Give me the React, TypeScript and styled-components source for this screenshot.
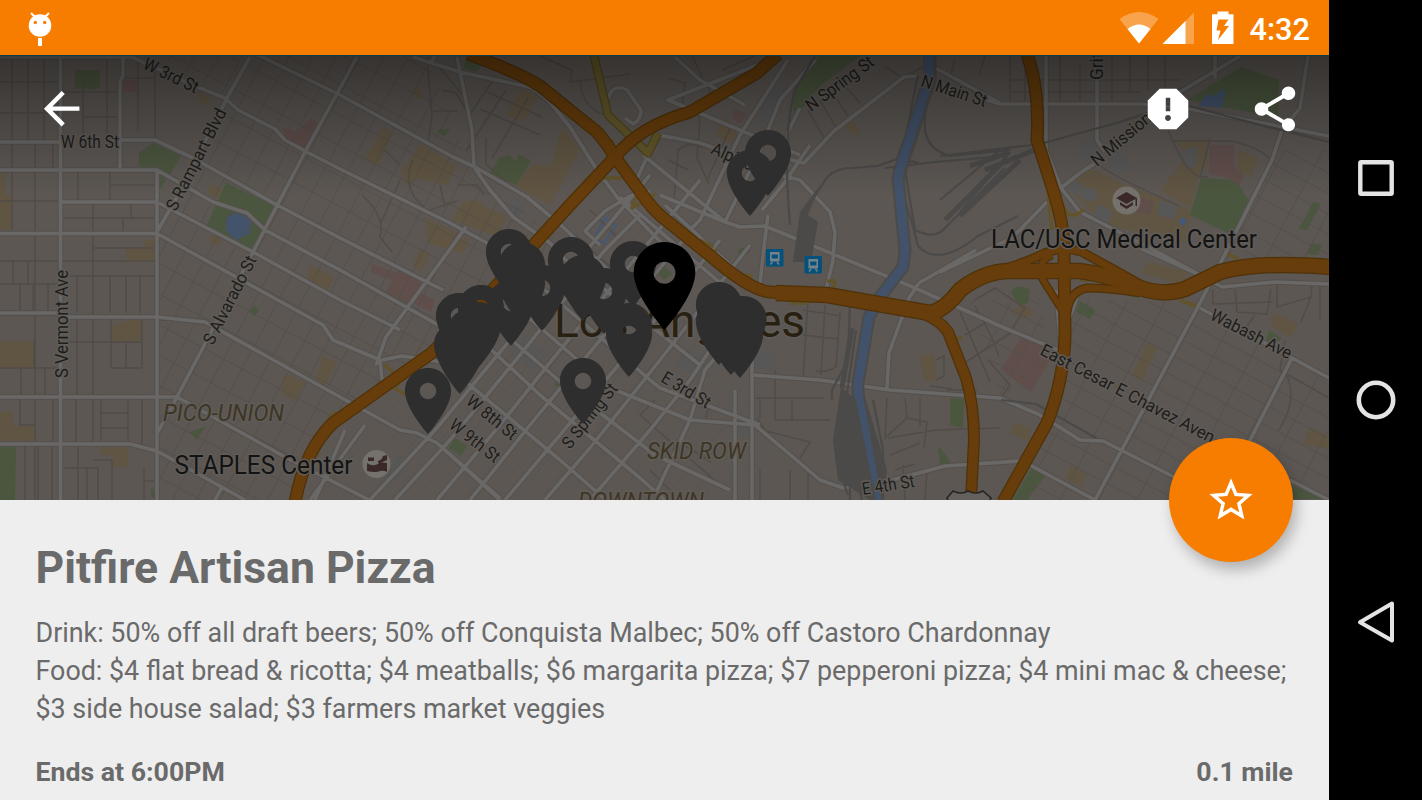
import React from "react";
import styled, { createGlobalStyle } from "styled-components";

const GlobalStyle = createGlobalStyle`
  body {
    margin: 0;
    background: #000;
    font-family: Roboto, "Liberation Sans", sans-serif;
  }
`;

const Device = styled.div`
  display: flex;
  width: 1422px;
  height: 800px;
  overflow: hidden;
  background: #000;
`;

const Screen = styled.div`
  display: flex;
  flex-direction: column;
  width: 1329px;
  height: 800px;
  background: #eee;
`;

const StatusBar = styled.div`
  display: flex;
  align-items: center;
  justify-content: space-between;
  box-sizing: border-box;
  height: 56px;
  flex: none;
  padding: 0 19px 0 28px;
  background: #f77d00;
  border-bottom: 1px solid #0b3b44;
`;

const StatusIcons = styled.div`
  display: flex;
  align-items: center;
`;

const Clock = styled.span`
  margin-left: 15px;
  color: #fff;
  font-size: 30.7px;
  font-weight: 500;
  line-height: 56px;
  padding-top: 4px;
`;

const Hero = styled.div`
  position: relative;
  display: grid;
  flex: none;
  height: 444px;

  & > * {
    grid-area: 1 / 1;
  }
`;

const Toolbar = styled.div`
  display: flex;
  align-items: center;
  justify-content: space-between;
  align-self: start;
  z-index: 1;
  height: 106px;
  padding: 0 27px 0 35px;
`;

const Actions = styled.div`
  display: flex;
  align-items: center;
  gap: 53px;
`;

const IconButton = styled.button`
  display: flex;
  padding: 0;
  border: 0;
  background: none;
`;

const Fab = styled.button`
  position: absolute;
  right: 36px;
  bottom: -62px;
  z-index: 2;
  display: flex;
  align-items: center;
  justify-content: center;
  width: 124px;
  height: 124px;
  padding: 0;
  border: 0;
  border-radius: 50%;
  background: #f77d00;
  box-shadow: 4px 8px 14px rgba(0, 0, 0, 0.25);
`;

const Details = styled.div`
  display: flex;
  flex-direction: column;
  flex: 1;
  padding: 40px 36px 0 35.5px;
  color: #6a6a6a;
`;

const Title = styled.h1`
  margin: 0;
  font-size: 44.5px;
  font-weight: 700;
  line-height: 56px;
`;

const Deals = styled.div`
  margin-top: 18px;
  font-size: 26.86px;
  line-height: 38px;
  white-space: nowrap;
`;

const Footer = styled.div`
  display: flex;
  justify-content: space-between;
  margin-top: 25px;
  font-size: 26.7px;
  font-weight: 700;
  line-height: 38px;
`;

const NavBar = styled.div`
  display: flex;
  flex-direction: column;
  align-items: center;
  justify-content: space-between;
  box-sizing: border-box;
  width: 93px;
  height: 800px;
  padding: 154px 0;
  background: #000;
`;

const MapSvg = styled.svg`
  display: block;
  background: #5c5753;
`;

const MapLabel = styled.text<{ $tone?: string }>`
  fill: ${(p) => p.$tone || "#1f1d1a"};
  stroke: #605c58;
  stroke-width: 3px;
  stroke-linejoin: round;
  paint-order: stroke;
`;

const PIN =
  "M12 2C8.13 2 5 5.13 5 9c0 5.25 7 13 7 13s7-7.75 7-13c0-3.87-3.13-7-7-7zm0 9.5c-1.38 0-2.5-1.12-2.5-2.5s1.12-2.5 2.5-2.5 2.5 1.12 2.5 2.5-1.12 2.5-2.5 2.5z";

// tip of each pin
const pins = [
  [428, 434], [509, 295], [522, 308], [511, 346], [542, 331], [571, 303], [583, 321],
  [604, 334], [633, 307], [629, 369], [629, 377], [583, 424], [719, 348], [719, 365],
  [731, 375], [740, 378], [743.5, 362], [459, 359], [481, 351], [478, 368], [470, 375],
  [466, 383], [457, 388], [460, 394], [768, 196], [750, 216], [522, 326], [722, 356],
  [733, 364],
];

type Label = {
  text: string;
  x: number;
  y: number;
  len: number;
  angle?: number;
  size?: number;
  tone?: string;
  italic?: boolean;
};

const AREA = "#3e3525";

const labels: Label[] = [
  { text: "W 3rd St", x: 142, y: 68, angle: 25.5, len: 59 },
  { text: "W 6th St", x: 61, y: 148, len: 58 },
  { text: "S Rampart Blvd", x: 176, y: 212, angle: -63, len: 112 },
  { text: "S Vermont Ave", x: 68, y: 378, angle: -90, len: 108 },
  { text: "S Alvarado St", x: 213, y: 346, angle: -63, len: 97 },
  { text: "N Spring St", x: 811, y: 112, angle: -36.5, len: 80 },
  { text: "N Main St", x: 920, y: 86, angle: 18, len: 68 },
  { text: "Alpine", x: 710, y: 153, angle: 24, len: 44 },
  { text: "N Mission", x: 1097, y: 167, angle: -40, len: 73 },
  { text: "Griffin", x: 1103, y: 80, angle: -90, len: 46 },
  { text: "Wabash Ave", x: 1209, y: 319, angle: 27, len: 89 },
  { text: "East Cesar E Chavez Aven", x: 1039, y: 354, angle: 27.5, len: 194 },
  { text: "E 3rd St", x: 660, y: 381, angle: 31, len: 54 },
  { text: "W 8th St", x: 465, y: 403, angle: 39, len: 60 },
  { text: "W 9th St", x: 448, y: 427, angle: 38, len: 59 },
  { text: "S Spring St", x: 570, y: 450, angle: -51.5, len: 78 },
  { text: "E 4th St", x: 863, y: 495, angle: -9, len: 53 },
  { text: "Los Angeles", x: 554, y: 337, len: 251, size: 47, tone: "#282010" },
  { text: "PICO-UNION", x: 163, y: 421, len: 121, size: 24, tone: AREA, italic: true },
  { text: "SKID ROW", x: 647, y: 459, len: 99, size: 23.5, tone: AREA, italic: true },
  { text: "DOWNTOWN", x: 578, y: 509, len: 126, size: 23.5, tone: AREA, italic: true },
  { text: "STAPLES Center", x: 174.5, y: 474, len: 178, size: 25.5, tone: "#141313" },
  { text: "LAC/USC Medical Center", x: 991, y: 248, len: 266, size: 25, tone: "#141313" },
];

const greens = [
  "M75 70h25v17l-7 3-8-2-10 1z",
  "M139 153l14-10 28 13-11 18-31-8z",
  "M160 175l6 5-6 10z",
  "M226 183l49 23-14 32-11 11-43-24z",
  "M0 447h16l-1 53H0z",
  "M189 432l16-5-8 13z",
  "M249 311l5-5 5 4-4 6z",
  "M490 173l10-16 9-1 7 5 3-7 12 7-15 24-26-12z",
  "M437 130l13-1-6 8z",
  "M465 60l17 5-6 7-12-4z",
  "M793 111c0-25 10-41 27-55h40l-40 30-22 27z",
  "M1187 100l54-33 38 13-1 38-90-18z",
  "M1201 178l35 2 16 25-20 30-42-20z",
  "M1313 202l8 2-14 26-8-1z",
  "M1312 243l10 2-5 10-10-1z",
  "M1011 292q8-10 19-2l-2 13-9 3z",
  "M1080 301l15 9-5 9-14-7z",
  "M950 398l14 1-1 29-13-3z",
  "M938 446l8 9 4 8-10 2z",
  "M1033 465l12 11-18 24h-14z",
  "M1269 330l13 9-12 5-3-5z",
  "M1290 485l39 14h-45z",
  "M560 376l8 5-4 10-10-6z",
  "M455 438l12 8-6 10-12-8z",
  "M657 272l7-6 8 8-8 6z",
  "M742 247l8 4-6 6-7-5z",
  "M151 488l4 2v8l-4-1z",
];

const tans = [
  "M0 173h5v22h6v35H0z",
  "M126 248h18v-8h10v22h-28z",
  "M112 326l17-6h13v21h-31z",
  "M0 341h34v27H0z",
  "M0 412h13v14l22 1v14H0z",
  "M101 447h27v20h-15v-12h-12z",
  "M199 92l12 6-6 7-7-4z",
  "M211 184l12 6-6 9-10-7z",
  "M213 234l9 5-6 7-8-6z",
  "M310 265l24 12-7 15-21-12z",
  "M323 356l14 7-12 22-10-5z",
  "M284 374l22 8-12 20-13-10z",
  "M383 127l10 6-16 33-12-7z",
  "M420 144l37 22-10 19-30-6-11 7-5-17 9-8z",
  "M417 85l6 10-3 5-7-6z",
  "M521 89l17 7-15 26-16-7z",
  "M562 127l18 23-30 55-37-21 22-20 16 2z",
  "M463 202l14-2 8 7 22 9-10 20-45-16z",
  "M425 217l45 23-7 14-35-11z",
  "M420 249l9 4-8 18-8-6z",
  "M723 117l16 12-7 15-16-8z",
  "M851 119l9 12-6 4-9-8z",
  "M920 356l14-3 2 28-12-1z",
  "M1012 312l12-8 11 10-14 4z",
  "M1015 422l17 8-4 12-18-9z",
  "M1070 465l17 9-6 12-15-7z",
  "M1148 262l40 10-5 14-42-14z",
  "M1147 343l10 5-15 33-10-5z",
  "M1272 312l26 12-7 14-20-12z",
  "M1309 428l20 7v14l-26-5z",
  "M1067 185l15-15 14 0 30 15 66 26-8 32-30-8-48-10-20-18z",
  "M1160 190l24-30 16 14-10 34z",
  "M1178 142l30 0 0 26-12 6-10-12z",
  "M1238 150l20 8-6 18-14-4z",
];

const reds = [
  "M122 80h15v12h-14z",
  "M283 127l13 5 15-14 8 6-13 25-20-8z",
  "M372 264l48 18-3 8-46-18z",
  "M398 270l30 15-18 20-24-13z",
  "M415 290l20 10-4 12-20-10z",
  "M735 109l12 5-6 9-9-5z",
  "M1022 336l34 14-25 42-30-22z",
  "M1210 145l24 0 0 20 10 12-5 8-14-8-16-4z",
  "M1140 197l14 6-4 12-14-4z",
];

const greys = [
  "M525 335l22 18-15 18-23-20z",
  "M510 193l14 12-5 15-10-6z",
  "M690 348l20 17-14 14-20-16z",
  "M1082 140l18 2 5 12-14 10-12-6z",
  "M1108 150l16 4 6 14-10 6-12-8z",
  "M1068 178l14 6-2 10-10-2z",
  "M1082 186l14 4 2 8-10 4-8-6z",
  "M1098 204l14 8-4 12-14-8z",
  "M1160 200l18 6-5 14-16-6z",
  "M1178 152l20-6-2 20-8 4z",
  "M398 455l12 8-14 18-10-8z",
  "M736 420l14 4v14l-14-6z",
  "M768 86l20 3-18 35-12-2z",
  "M752 352l22 4v14l-22-2z",
];

const minorRoads = [
  // west grid
  "M12 56V140M28 56V140M44 56V140M0 82H60M0 113H60M83 75V140M107 56V140M61 92H120M83 117H120M138 60V130M155 60V140M123 78H155",
  "M12 142V230M35 142V500M53 142V170M0 201H61M78 172V202M110 172V202M110 185H157M93 202V264M131 202V218M61 218H157M93 248H157M123 218V233",
  "M0 261H157M13 262V284M28 262V284M0 284H61M20 284V313M33 284V313M48 284V313M77 276V313M93 250V397M110 276V313M126 276V313M140 276V313M61 276H157",
  "M77 317V397M61 342H142M111 319V368M142 319V368M111 368H142M126 342V368M0 368H61M34 341V368M21 368V397M45 368V397",
  "M20 397V425H35M53 397V444M76 397V444M93 397V444M101 397V444M128 397V444M101 413H128M101 428H128M142 397V444",
  "M25 444V500M38 444V500M52 444V500M78 444V500M64 468H98V500M87 468V500M93 460H112V500M144 468V500M157 481H143",
  // echo park
  "M427 57l5 60-4 25M438 66l30 35M442 90l14 3 13 22v14M433 111h24M413 160q-10 20 2 38l12 13 30-10M457 185l20 0 7 10",
  "M486 138l0 26 25 22M495 77l-28 42M506 90l-40 61M528 98l-36 60M487 92l55 25M480 109l60 26M540 56l32 14-2 12 60-8M580 82q3 28 28 34",
  "M385 150l15 15M362 195q24 22 18 42l12 15M400 180l-20 45M440 185l5 22M575 235l50 45M590 210l30 30",
  // chinatown
  "M668 78l17 5-3 25M692 56l20 40-14 22M722 70l32-14M700 118l-3 40 12 26M674 200l4-50 10-6 22 4M730 128l-22 50M668 160l20 10",
  "M808 110l16 28M820 100l16 28M832 92l16 24M844 85l16 18M885 66l18 12 26-15M955 60l-5 18 30 18M985 56l-6 20",
  // north east
  "M1010 56V100M1025 60V106M1060 56V106M1080 62V106M1112 56V106M1130 56V90M1148 56V90M1165 56V88M1010 80H1180M1010 92H1140",
  "M1168 130q16 40 30 46l10 1M1172 141h60q30 8 38 18M1100 166q20 14 80 40M1200 178l10-40",
  // arts district
  "M803 310l38 6M803 335l35 4M808 300l-5 80M825 305l-4 70M840 312l-4 55q-10 6-20 4M887 398l-2 40 22-20 20 4-3 26M905 398l2 20M920 398l0 28",
  "M888 438l48-8 64-2M890 455l30-12M895 470l20-6M905 500l-2-35M925 500l2-30M947 390l30 0M936 360l8-4v20l-8 4M930 386l22 3",
  "M960 312l30 70M975 306l16 30 8 20M990 320l-25 15M1012 332l-46 30M975 300l20-12 30 20-16 26M988 360l22 25-8 12",
  // skid row
  "M752 375v120M775 370v50h55M752 398h72M760 398v20M792 400v20M762 430l48 12-10 16M790 470v30M808 470v30M760 470v30M772 440l-15-22",
  "M650 470l20 20M655 400l-15 15 80 70M690 420l-18 32M735 430v65M710 400l-5 22M676 440l35 22",
  // boyle heights
  "M1235 290l2 22 30 2 4-25M1213 290l0 14 60-2M1277 285v22l34-10 1-12M1311 297l-10 25M1320 285v35M1284 370q16 26-5 60",
  "M1285 340l-5 30 49 28M1255 315l-10 14 15 6",
];

const mainRoads = [
  "M60.500 56V500",
  "M123 56V75l-3 7V168",
  "M0 142H60M118 140H155L193 158 277 205 340 238 443 290",
  "M0 57H132L200 88 225 98 238 110 275 129 285 140 305 151 340 169 450 223 500 250",
  "M258 55L340 95 453 157 475 167 527 197 563 227 640 300",
  "M413 57L460 72 533 88 548 100 570 127 597 170 617 197 680 262",
  "M457 57L472 130 474 167 490 190 513 217 550 243 575 270",
  "M435 56L430 64",
  "M250 57L227 98 177 197 158 230",
  "M357 57L305 152 253 252 177 397 158 432",
  "M0 170H157L213 202 247 213 265 230 340 270 440 326",
  "M61 202H157L253 252 340 300 400 330",
  "M0 233.500H157L187 250 323 325 333 340 380 360 382 380",
  "M157 170V500",
  "M0 313H61V317H157L205 322 340 397 400 430 417 433 437 443 500 498",
  "M0 397H177L287 458 375 503",
  "M0 444H130L157 451 245 500M222 487l-7 13",
  "M315 500l30-70M310 500l55-75M376 365l10-28 80-110",
  // downtown, south-west to north-east
  "M370 500L437 428 500 352 615 217 650 175",
  "M395 500L450 440 520 355 560 305 605 250 640 215",
  "M437 500L500 425 560 350 700 180",
  "M470 500L530 425 600 340 690 232",
  "M505 500L560 435 635 345 720 240",
  "M545 500L590 448 660 360 750 245",
  "M590 500L650 430 690 380 710 350",
  "M655 495L690 420 705 370 730 340",
  "M735 500V390",
  "M752 500V340",
  // downtown, north-west to south-east
  "M382 360l20-4 40 6L560 460 606 500",
  "M437 443L500 500",
  "M470 330L540 395 640 478 665 500",
  "M500 330L570 390 655 455 730 490",
  "M520 310L610 388 690 420 755 425 820 480 843 488H862L945 466 1020 461",
  "M545 290L650 380 660 388 760 425",
  "M580 270L700 365",
  "M620 197L740 300",
  "M665 205L760 292",
  "M643 155L725 222 740 227 765 226 908 285 960 308 1000 326 1058 350",
  "M660 135L700 143 740 157 780 175 800 180 830 212 835 232 833 260 826 290",
  "M660 195L725 222M770 60L668 100 800 155M788 60L740 135 700 220 690 230M815 60L780 100 760 150 725 222",
  "M675 57L700 80 745 105M768 215l-5 40-3 30M800 108l-12 24-4 26 20 5 30-32 70-54 15-1M762 210L785 182 810 145",
  "M600 245l-15-14 20-20 25-15 20-5M605 110q5-30 22-20l14 20q0 10-8 14l-8-6",
  "M648 155l12-20 12 3M648 155l-14 30",
  // east
  "M752 375L820 380 890 390 1000 398 1040 415 1080 440 1103 441 1180 480",
  "M887 388l2-35 20-55 10-15 57-33M1056 290l4 50M1063 335l15-40",
  "M983 99L1000 104H1140L1190 109 1329 136",
  "M1046 56V150L1061 188 1080 173 1100 160M1097 80V140l8 12",
  "M1047 202L1012 238 940 272M1061 188L1080 212 1150 248 1200 275",
  "M1150 104L1180 92 1240 56M1215 56V78",
  "M1308 56L1300 108 1282 130 1272 160 1222 260 1200 303 1095 500",
  "M1140 248L1200 275 1222 287 1275 282 1329 284",
  "M1200 308L1292 358 1329 378M1292 358L1245 450",
  "M1030 465L1080 492 1095 500M1290 480L1329 500",
  "M930 65L1000 103",
];

const rails = [
  "M925 75l-20 62-8 22-20 7-25 2q-20 0-28 14L800 220",
  "M918 75l-14 70-8 20M925 90v40q3 20 25 26l60-6",
  "M885 168l50-6 70-6M893 166q18 50 25 80 20 22 60-10l40-20",
  "M905 170l10 60q20 10 30-2l60-60M940 200l60-50M960 212l50-60",
  "M903 185q0-30 15-22",
  "M856 330l-10 70-10 60 12 35M850 300l-2 60-16 30v10M842 400l-6 50 10 40M852 400l0 60 10 40M846 400l4 60 0 40M873 400l10 50 0 50",
  "M1001 400l35 4 60 34M1329 142l-80-20-60-16M940 156l100-12 80-22 30-10",
  "M790 225q-8-90 5-135l20-34",
];

// width is the carriageway, the casing adds 2.5 around it
const freeways = [
  {
    width: 10.5,
    d: "M468 54Q520 73 540 86L597 132Q608 145 615 157L647 201Q657 214 672 225L713 258Q750 290 770 292L785 293",
  },
  {
    width: 10.5,
    d: "M778 54L757 73 690 112Q640 126 615 157L570 205 497 285 433 352 333 423Q305 450 295 502",
  },
  {
    width: 14,
    d: "M776 293L827 295 930 313Q945 310 960 290 985 270 1013 271H1080Q1110 275 1140 288 1165 296 1185 289L1220 272Q1260 261 1331 267",
  },
  { width: 9.5, d: "M920 312Q940 320 948 332L966 378Q974 405 974 440L971 500" },
  {
    width: 10.5,
    d: "M1027 54Q1040 90 1037 140L1054 193Q1064 225 1064 250L1065 335Q1064 380 1047 423L1003 502",
  },
  { width: 7, d: "M1002 269Q1022 264 1045 253 1063 246 1082 252L1113 269 1145 287" },
  { width: 5.5, d: "M1052 255Q1034 264 1043 280L1062 310" },
  { width: 6.5, d: "M1140 293Q1110 288 1087 288 1070 291 1067 312" },
];

function Glyph({ size, d, fill = "#fff" }: { size: number; d: string; fill?: string }) {
  return (
    <svg width={size} height={size} viewBox="0 0 24 24" fill={fill}>
      <path d={d} />
    </svg>
  );
}

function Bus({ x, y }: { x: number; y: number }) {
  return (
    <g transform={`translate(${x} ${y})`}>
      <rect width="17.500" height="17.500" rx="1" fill="#04527c" />
      <path d="M4 3h9.500v9.500H4zM5.700 5.500V9.500h6.200v-4z" fill="#76838b" fillRule="evenodd" />
      <path d="M4.500 15.500l2-2.500M13 15.500l-2-2.500" stroke="#76838b" strokeWidth="1.500" />
    </g>
  );
}

function CityMap() {
  return (
    <MapSvg width="1329" height="444" viewBox="0 56 1329 444">
      <defs>
        <pattern id="westBlocks" width="21" height="27" patternUnits="userSpaceOnUse" patternTransform="translate(157 170) rotate(28)">
          <path d="M0 0H21M0 0V27" fill="none" stroke="#524d49" strokeWidth="1.500" />
        </pattern>
        <pattern id="eastBlocks" width="34" height="18" patternUnits="userSpaceOnUse" patternTransform="translate(1200 308) rotate(28)">
          <path d="M0 0H34M0 0V18" fill="none" stroke="#524d49" strokeWidth="1.500" />
        </pattern>
        <pattern id="downtownBlocks" width="19" height="40" patternUnits="userSpaceOnUse" patternTransform="translate(437 443) rotate(40)">
          <path d="M0 0V40" fill="none" stroke="#55514d" strokeWidth="1.200" />
        </pattern>
        <linearGradient id="scrim" x1="0" y1="0" x2="0" y2="1">
          <stop offset="0" stopColor="#000" stopOpacity="0.420" />
          <stop offset="0.400" stopColor="#000" stopOpacity="0.230" />
          <stop offset="1" stopColor="#000" stopOpacity="0" />
        </linearGradient>
      </defs>

      <path d={tans.join("")} fill="#605543" />
      <path d={greens.join("")} fill="#4b563f" />
      <path d={reds.join("")} fill="#604e4b" />
      <path d={greys.join("")} fill="#575757" />
      <path d="M226 218l12-7 15 7-4 16-13 6-10-9zM1198 106l8-12 8 2 12-8-4 20z" fill="#43536b" />
      <path d="M595 237l10-19 11 7-12 18z" fill="none" stroke="#435878" strokeWidth="2" />
      <path d="M1181 217l6 3-3 6-5-3z" fill="#435878" />

      <path d="M158 56H430L470 170 560 240 430 350 310 440 295 500H157V235L227 98Z" fill="url(#westBlocks)" />
      <path d="M1120 300L1200 303 1329 378V500H1020L1060 400 1075 300ZM1222 260L1275 150 1329 150V260ZM970 300H1040L1050 360 1000 398Z" fill="url(#eastBlocks)" />
      <path d="M345 440L500 290 640 220 740 340 735 500H320Z" fill="url(#downtownBlocks)" />

      <path d={minorRoads.join("")} fill="none" stroke="#514c48" strokeWidth="1.500" />
      <g fill="none" strokeLinejoin="round">
        <path d={mainRoads.join("")} stroke="#54504d" strokeWidth="5.600" />
        <path d={mainRoads.join("")} stroke="#696867" strokeWidth="3.600" />
        <path d={rails.join("")} stroke="#4b4a49" strokeWidth="2.200" />
        <path d="M1000 165L945 220M1008 153L970 166M1020 160L960 216M1035 150L985 170" stroke="#4b4a49" strokeWidth="5" />
        <path d="M930 56V80L903 162 898 178 905 250 903 267 880 297 869 317 858 383V393L877 500" stroke="#4c4b4a" strokeWidth="13" />
        <path d="M929 56V80L902 162 898 178 905 250 903 267 880 297 869 317 858 383V393L877 500" stroke="#42526a" strokeWidth="9" />
        <path d="M820 185L808 215 818 222 811 262H793L800 212Z" fill="#4b4a49" />
        <path d="M841 387L833 440 838 480 870 500H876L856 400ZM866 400L887 470 882 500Z" fill="#4b4a49" />
        <path d="M852 328L842 388" stroke="#4b4a49" strokeWidth="5" />

        <path d="M594 56L608 115 648 153 658 133" stroke="#4f471f" strokeWidth="9" />
        <path d="M594 56L608 115 648 153 658 133" stroke="#62572a" strokeWidth="6.500" />
        <path d="M602 135l12 8M603 178l22 0 12 16-5 14 24-14M700 240l12 6-3 8 8-4M742 276q12-4 8 8M827 281l8 0-2 12M790 303h18M950 338h12M1228 254l10 5M384 364l18 16-8 8 14 8M336 412l-8 6M1047 185l5 45M1062 205q8 18 22 4M1080 280h10M1180 300l16 6" stroke="#62532a" strokeWidth="3.500" />

        {freeways.map((f) => (
          <path key={f.d} d={f.d} stroke="#4f3209" strokeWidth={f.width + 2.5} />
        ))}
        {freeways.map((f) => (
          <path key={f.d} d={f.d} stroke="#673d0b" strokeWidth={f.width} />
        ))}
      </g>
      <path d="M947 498l6-7q8 4 15 0 8 4 15 0l8 7-4 8h-36z" fill="#63605d" stroke="#252422" strokeWidth="1.600" />

      {labels.map((l) => (
        <MapLabel
          key={l.text}
          $tone={l.tone}
          fontSize={l.size || 17.5}
          fontStyle={l.italic ? "italic" : "normal"}
          textLength={l.len}
          lengthAdjust="spacingAndGlyphs"
          transform={`translate(${l.x} ${l.y}) rotate(${l.angle || 0})`}
        >
          {l.text}
        </MapLabel>
      ))}

      <Bus x={766} y={249} />
      <Bus x={804.5} y={256} />
      <circle cx="1126.500" cy="200.500" r="14" fill="#75716d" />
      <path d="M1116 198l10.500-6 10.500 6v8h-1.500v-7l-9 5zM1120 202l6.500 4 6.500-4v3l-6.500 4-6.500-4z" fill="#3b2927" />
      <circle cx="376.500" cy="464" r="14" fill="#75716d" />
      <path
        d="M367 463q4 3 8 2 3 0 5-3 4 1 7 1v9q-3-2-7-1-4 2-13 0zM368 457l2 1 1-1 1 1 2-1v4h-6zM378 461q4-1 5-5l4-1v5q-5 3-9 3z"
        fill="#3b2927"
      />

      <rect y="56" width="1329" height="140" fill="url(#scrim)" />

      {pins.map(([x, y]) => (
        <path key={`${x}-${y}`} d={PIN} fill="#2e2e2e" transform={`translate(${x - 12 * 3.3} ${y - 22 * 3.3}) scale(3.3)`} />
      ))}
      <path d={PIN} fill="#000" transform="translate(611.700 233.200) scale(4.400)" />
    </MapSvg>
  );
}

function App() {
  return (
    <Device>
      <GlobalStyle />
      <Screen>
        <StatusBar>
          <svg width="24" height="36" viewBox="0 0 24 36">
            <circle cx="12" cy="15.500" r="11.300" fill="#fff" />
            <path d="M3 3l4 4M21 3l-4 4" stroke="#fff" strokeWidth="2" />
            <path d="M10 28h4v8h-4z" fill="#fff" />
            <circle cx="7.300" cy="12.500" r="1.700" fill="#f77d00" />
            <circle cx="16.700" cy="12.500" r="1.700" fill="#f77d00" />
          </svg>
          <StatusIcons>
            <svg width="115" height="34" viewBox="0.5 0 115 34">
              <path d="M19.500 32.500L0 8Q19.500-6 39 8z" fill="#fff" opacity="0.300" />
              <path d="M19.500 32.500L8 18Q19.500 9 31 18z" fill="#fff" />
              <path d="M43 33L74.500 1.500V33z" fill="#fff" opacity="0.300" />
              <path d="M43 33L66 10V33z" fill="#fff" />
              <path
                d="M98 0.500h11v2.800h5V33H92.500V3.300H98zM99 8.500l-2 11h4l-2.500 9.500 11-14h-5l4.500-6.500z"
                fill="#fff"
                fillRule="evenodd"
              />
            </svg>
            <Clock>4:32</Clock>
          </StatusIcons>
        </StatusBar>

        <Hero>
          <CityMap />
          <Toolbar>
            <IconButton aria-label="Back">
              <Glyph size={53.3} d="M20 11H7.830l5.590-5.590L12 4l-8 8 8 8 1.410-1.410L7.830 13H20v-2z" />
            </IconButton>
            <Actions>
              <IconButton aria-label="Report">
                <Glyph
                  size={54}
                  d="M15.730 3H8.270L3 8.270v7.460L8.270 21h7.460L21 15.730V8.270L15.730 3zM12 17.300c-.720 0-1.300-.580-1.300-1.300 0-.720.580-1.300 1.300-1.300.720 0 1.300.580 1.300 1.300 0 .720-.580 1.300-1.300 1.300zm1-4.300h-2V7h2v6z"
                />
              </IconButton>
              <IconButton aria-label="Share">
                <Glyph
                  size={54}
                  d="M18 16.080c-.760 0-1.440.300-1.960.770L8.910 12.700c.050-.230.090-.460.090-.700s-.040-.470-.090-.700l7.050-4.110c.540.500 1.250.810 2.040.810 1.660 0 3-1.340 3-3s-1.340-3-3-3-3 1.340-3 3c0 .240.040.470.090.700L8.040 9.810C7.500 9.310 6.790 9 6 9c-1.660 0-3 1.340-3 3s1.340 3 3 3c.790 0 1.500-.310 2.040-.810l7.120 4.160c-.050.210-.080.430-.080.650 0 1.610 1.310 2.920 2.920 2.920s2.920-1.310 2.920-2.920-1.310-2.920-2.920-2.920z"
                />
              </IconButton>
            </Actions>
          </Toolbar>
          <Fab aria-label="Favorite">
            <Glyph
              size={52}
              d="M22 9.240l-7.190-.620L12 2 9.190 8.630 2 9.240l5.460 4.730L5.820 21 12 17.270 18.180 21l-1.630-7.030L22 9.240zM12 15.400l-3.760 2.270 1-4.280-3.320-2.880 4.380-.380L12 6.100l1.710 4.040 4.380.380-3.320 2.880 1 4.280L12 15.400z"
            />
          </Fab>
        </Hero>

        <Details>
          <Title>Pitfire Artisan Pizza</Title>
          <Deals>
            Drink: 50% off all draft beers; 50% off Conquista Malbec; 50% off Castoro Chardonnay
            <br />
            Food: $4 flat bread &amp; ricotta; $4 meatballs; $6 margarita pizza; $7 pepperoni pizza; $4 mini mac &amp; cheese;
            <br />
            $3 side house salad; $3 farmers market veggies
          </Deals>
          <Footer>
            <span>Ends at 6:00PM</span>
            <span>0.1 mile</span>
          </Footer>
        </Details>
      </Screen>

      <NavBar>
        <svg width="48" height="48" viewBox="0 0 48 48" fill="none" stroke="#e4e4e4">
          <rect x="8.300" y="8.300" width="31.400" height="31.400" rx="1" strokeWidth="4.400" />
        </svg>
        <svg width="48" height="48" viewBox="0 0 48 48" fill="none" stroke="#e4e4e4">
          <circle cx="24" cy="24" r="17.200" strokeWidth="4.600" />
        </svg>
        <svg width="48" height="48" viewBox="0 0 48 48" fill="none" stroke="#e4e4e4">
          <path d="M40 5.500L8 24.300 40 42.500z" strokeWidth="4" strokeLinejoin="round" />
        </svg>
      </NavBar>
    </Device>
  );
}

export default App;
